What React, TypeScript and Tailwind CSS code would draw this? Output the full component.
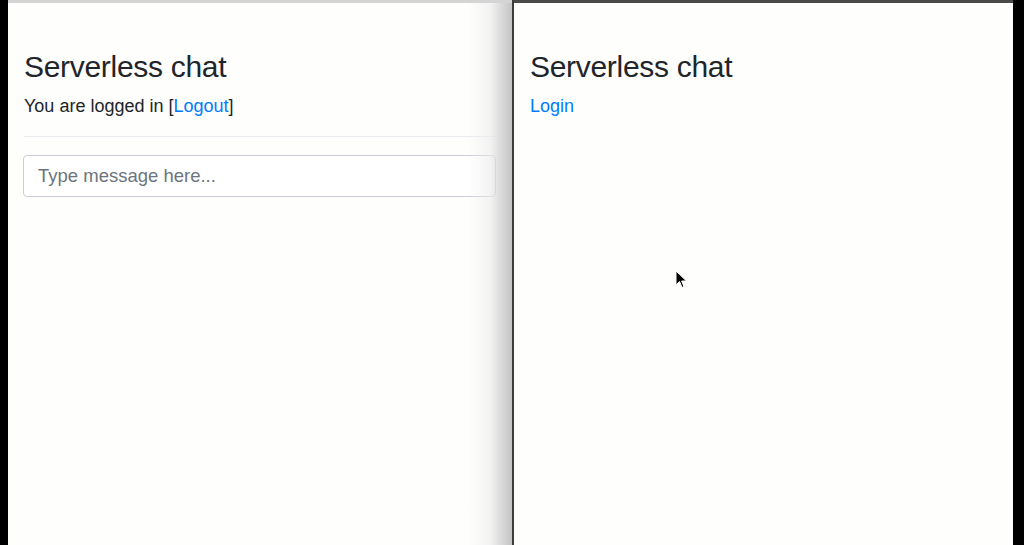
import React from 'react'

const FONT = { fontFamily: '"Liberation Sans", Arial, sans-serif' }

function Cursor() {
  return (
    <svg className="absolute left-[675px] top-[270px]" width="14" height="20" viewBox="0 0 14 20">
      <path d="M1 1 L1 15 L4.5 11.5 L7 17.5 L9 16.6 L6.6 11 L11.5 11 Z" fill="#000" stroke="#fff" strokeWidth="1" />
    </svg>
  )
}

export default function App() {
  return (
    <div className="relative w-[1024px] h-[545px] flex bg-black overflow-hidden text-[#212529]" style={FONT}>
      <div className="w-[8px] shrink-0 bg-black" />

      {/* 左窗口 */}
      <div className="relative w-[504px] shrink-0 flex flex-col bg-[#fefefd]">
        <div className="h-[3px] bg-[#d4d4d4]" />
        <div className="px-[16px] pt-[46px]">
          <h2 className="text-[30px] leading-[36px] font-normal tracking-[-0.3px]">Serverless chat</h2>
          <p className="mt-[9px] text-[18px] leading-[24px]">
            You are logged in [<a className="text-[#007bff]">Logout</a>]
          </p>
          <hr className="mt-[18px] border-t border-[#e9ecef]" />
          <input
            className="mt-[18px] w-[473px] -ml-px h-[42px] px-[14px] text-[18.5px] border border-[#c9ced4] rounded-[4px] bg-white placeholder:text-[#6c757d] outline-none"
            style={FONT}
            placeholder="Type message here..."
          />
        </div>
        <div className="absolute right-0 top-[3px] bottom-0 w-[44px] bg-gradient-to-r from-transparent via-[#ebebeb]/60 to-[#c4c4c4]" />
      </div>

      <div className="w-[2px] shrink-0 bg-[#3c3c3c]" />

      {/* 右窗口 */}
      <div className="w-[499px] shrink-0 flex flex-col bg-[#fefefd]">
        <div className="h-[3px] bg-[#4a4a4a]" />
        <div className="px-[16px] pt-[46px]">
          <h2 className="text-[30px] leading-[36px] font-normal tracking-[-0.3px]">Serverless chat</h2>
          <p className="mt-[9px] text-[18px] leading-[24px]">
            <a className="text-[#007bff]">Login</a>
          </p>
        </div>
      </div>

      <div className="flex-1 bg-black" />
      <Cursor />
    </div>
  )
}
